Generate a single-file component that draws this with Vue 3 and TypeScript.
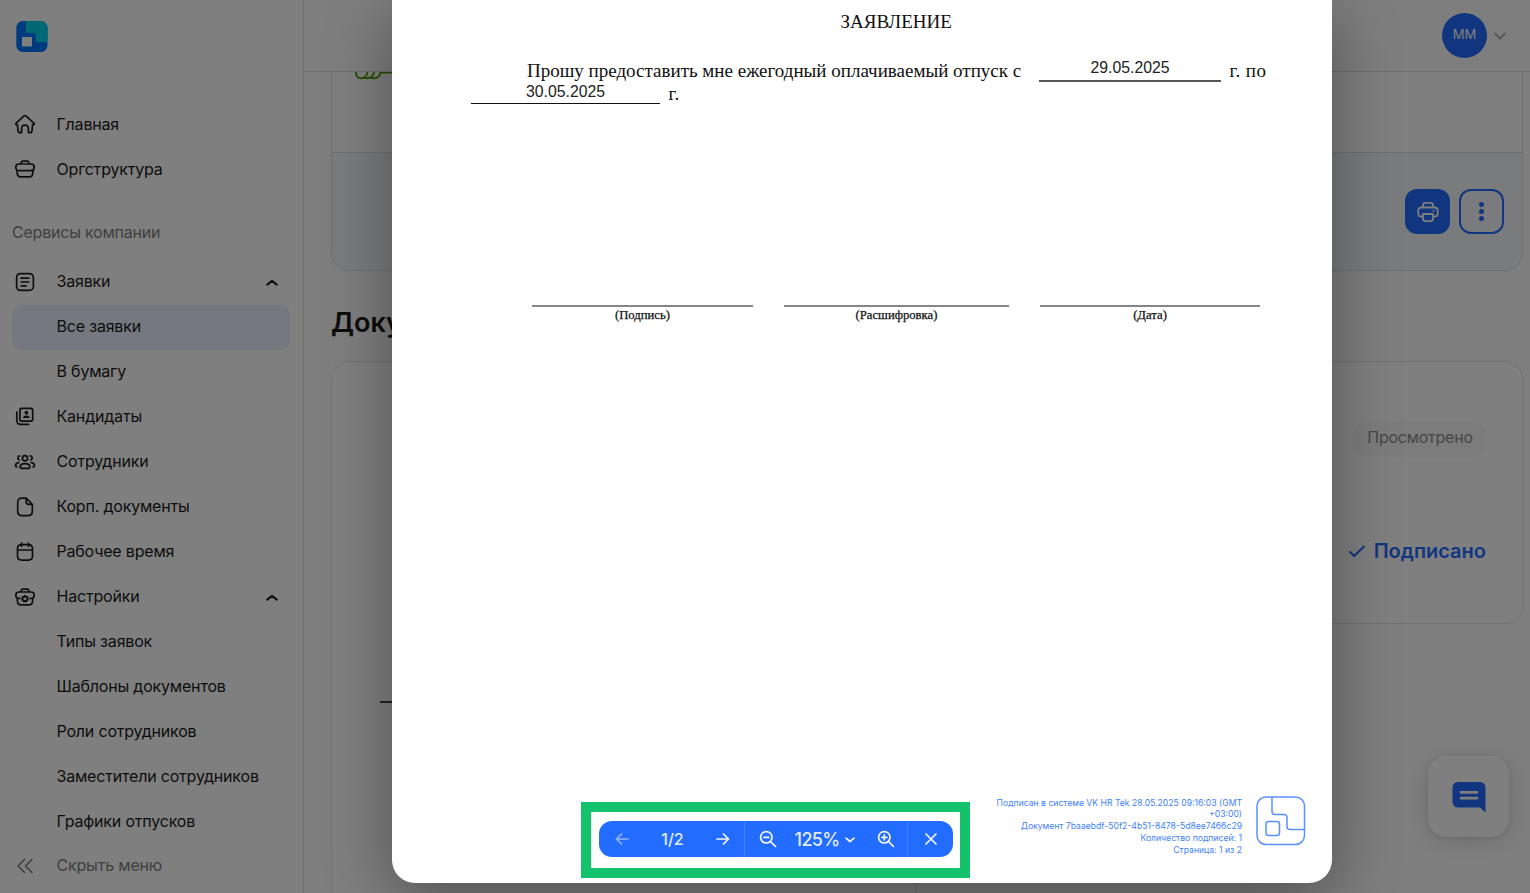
<script setup lang="ts">
interface NavItem {
  label: string
  icon?: string
  open?: boolean
  active?: boolean
}

const mainNav: NavItem[] = [
  { label: 'Главная', icon: 'home' },
  { label: 'Оргструктура', icon: 'case' },
]

const serviceNav: NavItem[] = [
  { label: 'Заявки', icon: 'list', open: true },
  { label: 'Все заявки', active: true },
  { label: 'В бумагу' },
  { label: 'Кандидаты', icon: 'cards' },
  { label: 'Сотрудники', icon: 'users' },
  { label: 'Корп. документы', icon: 'file' },
  { label: 'Рабочее время', icon: 'calendar' },
  { label: 'Настройки', icon: 'settings', open: true },
  { label: 'Типы заявок' },
  { label: 'Шаблоны документов' },
  { label: 'Роли сотрудников' },
  { label: 'Заместители сотрудников' },
  { label: 'Графики отпусков' },
]

const icons: Record<string, string> = {
  home: 'M1.9 10.300 9.700 3.100a2 2 0 0 1 2.600 0l7.800 7.200c.5.6.1 1.300-.6 1.300h-.9l-.6 6a2.100 2.100 0 0 1-2.100 2h-1.500v-3.800c0-2.600-1-3.700-3.400-3.700s-3.400 1.100-3.400 3.700v3.800H6.100a2.100 2.100 0 0 1-2.100-2l-.6-6h-.9c-.7 0-1.100-.7-.6-1.300z',
  case: 'M7.200 6V4.900C7.200 3.700 7.800 3.100 9 3.100h4c1.200 0 1.800.6 1.800 1.800V6M5 6h12c2.300 0 3.200 1 3.200 3.300 0 2.200-1 3.300-3.200 3.300H5c-2.200 0-3.200-1.100-3.200-3.300C1.800 7 2.700 6 5 6zM2.900 12l.4 3.800c.3 2 1.200 3 3.200 3h9c2 0 2.900-1 3.200-3l.4-3.800',
  list: 'M7.200 2.600h7.600c3.500 0 4.600 1.100 4.600 4.600v7.600c0 3.500-1.100 4.600-4.600 4.600H7.200c-3.500 0-4.600-1.100-4.600-4.600V7.200c0-3.500 1.100-4.600 4.600-4.600zM7.200 7.200h7.600M7.200 11h7.600M7.200 14.800h5',
  cards: 'M7.800 2.300h9c1.400 0 1.900.5 1.900 1.900v9c0 1.400-.5 1.900-1.900 1.900h-9c-1.400 0-1.900-.5-1.900-1.900v-9c0-1.400.5-1.900 1.900-1.900zM2.800 6v8.200c0 3 1 4.100 4.100 4.100h7.700',
  users: 'M8.400 7.300a2.600 2.600 0 1 0 5.200 0a2.600 2.600 0 1 0-5.200 0M11 12.600c3 0 4.800 1.600 4.800 3.300 0 1-.7 1.500-1.800 1.500H8c-1.100 0-1.800-.5-1.800-1.500 0-1.700 1.800-3.300 4.800-3.300zM5.700 4.900A2.100 2.100 0 0 0 5.300 9M16.300 4.900A2.100 2.100 0 0 1 16.700 9M4.700 11.700C2.700 12 1.500 13.300 1.500 14.700c0 .9.500 1.300 1.500 1.300M17.300 11.700c2 .3 3.200 1.600 3.200 3 0 .9-.5 1.300-1.500 1.300',
  file: 'M12.200 2.200H8.200c-3.300 0-4.500 1.200-4.500 4.300v8.800c0 3.200 1.200 4.400 4.500 4.400h5.600c3.300 0 4.500-1.200 4.500-4.400V8.300L12.200 2.200v3.900c0 1.600.7 2.300 2.300 2.300h3.800',
  calendar: 'M7.500 3.700h7c2.900 0 4 1.100 4 4v7.400c0 2.900-1.100 4-4 4h-7c-2.900 0-4-1.100-4-4V7.700c0-2.900 1.100-4 4-4zM3.500 9h15M7.500 2v3.200M14.500 2v3.200',
  settings: 'M7.200 6V4.900C7.200 3.700 7.800 3.100 9 3.100h4c1.200 0 1.800.6 1.800 1.800V6M6 12.300H3.800c-1.300-.4-2-1.500-2-3.300C1.800 7 2.800 6 5 6h12c2.200 0 3.200 1 3.200 3 0 1.800-.7 2.900-2 3.300H16M3.200 12.300l.3 3.500c.3 2 1.100 3 3.100 3h8.800c2 0 2.800-1 3.100-3l.3-3.500M11 9.600l.9 1.400 1.700-.2-.4 1.600.9 1.300-1.500.6-.6 1.400-1-1.100-1 1.100-.6-1.400-1.500-.6.9-1.300-.4-1.600 1.700.2z',
}

const signFields: { label: string; kind: string }[] = [
  { label: '(Подпись)', kind: 'signature' },
  { label: '(Расшифровка)', kind: 'name' },
  { label: '(Дата)', kind: 'date' },
]
</script>

<template>
  <div class="shell">
    <aside class="sidebar">
      <svg class="logo" viewBox="0 0 32 32">
        <rect x="0.300" y="0" width="31.200" height="31" rx="6.500" fill="#0077ff" />
        <path d="M10 0h15a6.500 6.500 0 0 1 6.500 6.500V21H20V12H10z" fill="#00d3e6" />
        <rect x="6" y="16" width="10" height="9.500" fill="#fff" />
      </svg>
      <nav>
        <div v-for="n in mainNav" :key="n.label" class="nav-item top">
          <svg class="nav-icon" viewBox="0 0 22 22"><path :d="icons[n.icon!]" /></svg>
          <span class="nav-label">{{ n.label }}</span>
        </div>
        <div class="nav-title">Сервисы компании</div>
        <div v-for="n in serviceNav" :key="n.label" class="nav-item" :class="{ active: n.active }">
          <svg class="nav-icon" viewBox="0 0 22 22">
            <path v-if="n.icon" :d="icons[n.icon]" />
            <path v-if="n.icon === 'cards'" class="solid" d="M10.500 6.700a1.900 1.900 0 1 1 3.800 0a1.900 1.900 0 1 1-3.800 0M9 12c0-1.500 1.300-2.400 3.400-2.400s3.400.9 3.400 2.400z" />
          </svg>
          <span class="nav-label">{{ n.label }}</span>
          <svg v-if="n.open" class="chev" viewBox="0 0 14 14"><path d="m2.200 9.700 4.800-4 4.800 4" /></svg>
        </div>
        <div class="nav-item hide">
          <svg class="nav-icon" viewBox="0 0 22 22"><path d="M10.500 4.500 4 11l6.500 6.500M18 4.500 11.500 11l6.500 6.500" /></svg>
          <span class="nav-label">Скрыть меню</span>
        </div>
      </nav>
    </aside>

    <main class="main">
      <header class="topbar">
        <div class="avatar">ММ</div>
        <svg class="down" viewBox="0 0 14 10"><path d="m1.500 2 5.500 5.500L12.500 2" /></svg>
      </header>
      <section class="summary">
        <div class="summary-top">
          <svg class="scribble" viewBox="0 0 60 9"><path d="M1 0c0 4 2 6.200 5 6.200S12 4 12.500 0M8 5c1 1 2 1.200 4 1.200C16 6 18.500 4 19 0M14.500 5c1 1 2 1.200 4 1.200C22.500 6 25 4 25.500.6H60" /></svg>
        </div>
        <div class="summary-actions">
          <button class="btn primary">
            <svg viewBox="0 0 22 22"><path d="M6 6.500V4.300C6 2.700 6.700 1.800 8.300 1.800h5.400c1.600 0 2.300.9 2.300 2.500v2.200M6 15.500H4.300C2.400 15.500 1.300 14.600 1.300 12.700V9.300c0-1.900 1.100-2.800 3-2.800h13.400c1.900 0 3 .9 3 2.800v3.400c0 1.900-1.100 2.800-3 2.800H16M6 13h10v4.500c0 1.900-.7 2.700-2.500 2.700h-5C6.700 20.200 6 19.400 6 17.500zM16.500 9.900h.3" /></svg>
          </button>
          <button class="btn outline"><i></i><i></i><i></i></button>
        </div>
      </section>
      <h2>Документы</h2>
      <div class="cards">
        <div class="card preview"><div class="rule"></div></div>
        <div class="card status">
          <span class="pill">Просмотрено</span>
          <div class="signed">
            <svg viewBox="0 0 18 14"><path d="m1.500 7.300 4.700 4.700L16.500 2" /></svg>
            <span>Подписано</span>
          </div>
        </div>
      </div>
    </main>

    <div class="chat">
      <svg viewBox="0 0 34 32"><path d="M6 0h22a5.500 5.500 0 0 1 5.500 5.500V30.500L28 25.500H6A5.500 5.500 0 0 1 .5 20V5.500A5.500 5.500 0 0 1 6 0z" fill="#226cff" /><path d="M9 10.300h16M9 16.200h16" stroke="#fff" stroke-width="2.800" stroke-linecap="round" /></svg>
    </div>

    <div class="overlay">
      <article class="sheet">
        <div class="doc-title">ЗАЯВЛЕНИЕ</div>
        <div class="doc-line first">
          <span class="text">Прошу предоставить мне ежегодный оплачиваемый отпуск с</span>
          <span class="field from">29.05.2025</span>
          <span class="tail">г. по</span>
        </div>
        <div class="doc-line second">
          <span class="field to">30.05.2025</span>
          <span class="tail">г.</span>
        </div>
        <div class="signs">
          <div v-for="s in signFields" :key="s.kind" class="sign" :class="s.kind">{{ s.label }}</div>
        </div>
        <div class="stamp">
          <div class="stamp-text">
            <div>Подписан в системе VK HR Tek 28.05.2025 09:16:03 (GMT</div>
            <div>+03:00)</div>
            <div>Документ 7baaebdf-50f2-4b51-8478-5d8ee7466c29</div>
            <div>Количество подписей: 1</div>
            <div>Страница: 1 из 2</div>
          </div>
          <svg viewBox="0 0 50 50"><rect x="1" y="1" width="47.500" height="47.500" rx="9" /><path d="M16 1v14.500c0 2 1 3 3 3h9c2 0 3 1 3 3v9c0 2 1 3 3 3h14.500" /><rect x="10" y="25.500" width="13.500" height="14" rx="2.500" /></svg>
        </div>
        <div class="frame">
          <div class="toolbar">
            <div class="group pages">
              <svg class="dim" viewBox="0 0 14 14"><path d="M13 7H1.500M6.500 2l-5 5 5 5" /></svg>
              <span>1/2</span>
              <svg viewBox="0 0 14 14"><path d="M1 7h11.500M7.500 2l5 5-5 5" /></svg>
            </div>
            <div class="group zoomer">
              <svg class="lens" viewBox="0 0 18 18"><circle cx="7.300" cy="7.300" r="5.700" /><path d="m11.500 11.500 5 5M4.800 7.300h5" /></svg>
              <span class="pct"><span>125%</span><svg viewBox="0 0 10 6"><path d="M1 1.200 5 4.500 9 1.200" /></svg></span>
              <svg class="lens" viewBox="0 0 18 18"><circle cx="7.300" cy="7.300" r="5.700" /><path d="m11.500 11.500 5 5M4.800 7.300h5M7.300 4.800v5" /></svg>
            </div>
            <div class="group close"><svg viewBox="0 0 14 14"><path d="m2 2 10 10M12 2 2 12" /></svg></div>
          </div>
        </div>
      </article>
    </div>
  </div>
</template>

<style>
body { overflow: hidden; }
</style>

<style scoped>
* { box-sizing: border-box; }
.shell { position: relative; display: flex; width: 1530px; height: 893px; overflow: hidden; background: #fff; font-family: Inter, "Noto Sans", sans-serif; color: #222; }
svg { display: block; flex: none; fill: none; }
.sidebar { width: 304px; flex: none; border-right: 1px solid #dcdcdc; padding: 21px 13px 0 12px; }
.logo { width: 32px; height: 32px; margin-left: 4px; }
nav { margin-top: 49px; }
.nav-item { display: flex; align-items: center; height: 45px; width: 278px; padding: 0 0 2px 2px; border-radius: 9px; font-size: 16px; font-weight: 400; letter-spacing: -0.19px; color: #1a1a1a; }
.nav-item.active { background: #ecf0fe; }
.nav-icon { width: 22px; height: 22px; margin-right: 20.500px; }
.nav-icon path { stroke: #1c1c1c; stroke-width: 1.700; stroke-linecap: round; stroke-linejoin: round; }
.nav-icon .solid { fill: #1c1c1c; stroke: none; }
.nav-label { flex: 1; line-height: 22px; padding-bottom: 1px; }
.top .nav-label { padding-bottom: 0; }
.chev { width: 14px; height: 14px; margin-right: 11px; }
.chev path { stroke: #111; stroke-width: 2; stroke-linecap: round; stroke-linejoin: round; }
.nav-title { height: 68px; padding-top: 29px; line-height: 22px; font-size: 16px; font-weight: 400; letter-spacing: -0.22px; color: #808080; }
.nav-item.hide { color: #808080; height: 43px; }
.hide .nav-icon path { stroke: #777; stroke-width: 1.500; }
.main { flex: 1; height: 893px; background: #fdfdfd; }
.topbar { height: 72px; border-bottom: 1px solid #dcdcdc; display: flex; align-items: center; justify-content: flex-end; padding-right: 23px; }
.avatar { width: 45px; height: 45px; border-radius: 50%; background: #226cff; color: #fff; font-size: 13px; text-align: center; line-height: 42px; }
.down { width: 14px; height: 10px; margin-left: 6px; }
.down path { stroke: #aaaeb5; stroke-width: 2; }
.summary { margin: 0 7px 0 27px; height: 199px; border: 1px solid #dcdfe3; border-top: 0; border-radius: 0 0 18px 18px; overflow: hidden; background: #fff; }
.summary-top { height: 81px; border-bottom: 1px solid #dcdfe3; padding-left: 23px; }
.scribble { width: 60px; height: 9px; }
.scribble path { stroke: #4b9b00; stroke-width: 1.900; }
.summary-actions { height: 117px; background: #f3f7fb; display: flex; align-items: center; justify-content: flex-end; gap: 9px; padding-right: 18px; }
.btn { width: 45px; height: 45px; border-radius: 12px; border: 2px solid #226cff; background: none; display: flex; flex-direction: column; align-items: center; justify-content: center; gap: 2px; padding: 0; }
.btn.primary { background: #226cff; }
.btn svg { width: 22px; height: 22px; }
.btn svg path { stroke: #fff; stroke-width: 1.800; stroke-linecap: round; stroke-linejoin: round; }
.btn i { width: 5px; height: 5px; border-radius: 50%; background: #226cff; }
h2 { margin: 35px 0 0 27px; height: 55px; font-size: 27px; line-height: 34px; font-weight: 600; color: #1a1a1a; }
.cards { display: flex; justify-content: space-between; margin: 0 7px 0 27px; align-items: flex-start; }
.card { border: 1px solid #e3e3e3; border-radius: 18px; background: #fff; }
.preview { width: 585px; height: 640px; padding: 339px 48px 0; }
.rule { height: 2px; background: #444; }
.status { width: 590px; height: 263px; padding: 59px 36px 0; display: flex; flex-direction: column; align-items: flex-end; }
.pill { height: 36px; width: 132px; border-radius: 13px; background: #f9f9f9; text-align: center; line-height: 32px; font-size: 16px; letter-spacing: -0.25px; color: #8c8c8c; }
.signed { display: flex; align-items: center; margin-top: 81px; font-size: 20px; line-height: 26px; font-weight: 600; color: #226cff; }
.signed svg { width: 18px; height: 14px; margin-right: 8px; }
.signed svg path { stroke: #226cff; stroke-width: 2; }
.chat { position: absolute; left: 1428px; top: 756px; width: 81px; height: 81px; border-radius: 18px; background: #fff; box-shadow: 0 4px 24px rgba(0, 16, 61, 0.12), 0 1px 6px rgba(0, 16, 61, 0.1); display: flex; align-items: center; justify-content: center; padding-top: 2px; }
.chat svg { width: 34px; height: 32px; }
.overlay { position: absolute; inset: 0; background: rgba(0, 0, 0, 0.5); padding-left: 392px; }
.sheet { position: relative; width: 940px; height: 883px; border-radius: 0 0 23px 23px; background: #fff; box-shadow: 0 16px 64px rgba(0, 0, 0, 0.36); color: #111; font-family: "Liberation Serif", serif; font-size: 19px; }
.doc-title { padding: 10px 0 0 448.500px; line-height: 24px; }
.doc-line { display: flex; align-items: flex-start; line-height: 24px; }
.first { margin-top: 25px; height: 24px; padding-left: 135px; }
.text { width: 512px; white-space: nowrap; }
.field { font-family: "Liberation Sans", sans-serif; font-size: 15.800px; height: 23px; line-height: 18px; text-align: center; border-bottom: 2px solid #555; color: #222; }
.from { width: 182px; }
.tail { margin-left: 8.500px; letter-spacing: 0.4px; }
.second { padding-left: 79px; height: 24px; }
.second .tail { margin-top: -1px; }
.to { width: 189px; height: 21px; line-height: 17px; border-bottom: 1.500px solid #111; }
.signs { display: flex; gap: 31px; margin: 198px 0 0 140px; }
.sign { border-top: 2px solid #858585; width: 221px; text-align: center; font-size: 12.700px; line-height: 16px; -webkit-text-stroke: 0.25px #111; }
.sign.name { width: 225px; }
.sign.date { width: 220px; }
.stamp { position: absolute; right: 26px; top: 796px; display: flex; gap: 14px; }
.stamp svg { width: 50px; height: 50px; }
.stamp svg * { stroke: #5a91ff; stroke-width: 1.500; }
.stamp-text { padding-top: 1.500px; font-family: Inter, sans-serif; font-size: 8.650px; line-height: 11.850px; text-align: right; color: #3f7fff; white-space: nowrap; }
.frame { position: absolute; left: 189px; top: 802px; width: 389px; height: 76px; border: 10px solid #14c26b; padding: 9px 7px 0 8px; }
.toolbar { display: flex; width: 354px; height: 36px; border-radius: 13px; background: #226cff; color: #e3ecff; font-family: Inter, sans-serif; }
.group { display: flex; align-items: center; }
.group + .group { border-left: 1px solid #4684ff; }
.group svg path, .group svg circle { stroke: #f4f7ff; stroke-width: 1.700; stroke-linecap: round; stroke-linejoin: round; }
.group svg.dim path { stroke: #94b7ff; }
.pages { width: 145px; justify-content: space-between; padding: 0 14px 0 16px; font-size: 16px; font-weight: 500; }
.pages span { padding-bottom: 1px; }
.pages svg, .close svg { width: 14px; height: 14px; }
.zoomer { width: 163px; justify-content: space-between; padding: 0 12px 0 14px; font-size: 18px; font-weight: 500; letter-spacing: -0.7px; }
.lens { width: 18px; height: 18px; }
.pct { display: flex; align-items: center; gap: 6px; padding: 1px 4px 0 0; }
.pct svg { width: 10px; height: 6px; }
.close { flex: 1; justify-content: center; }
</style>
